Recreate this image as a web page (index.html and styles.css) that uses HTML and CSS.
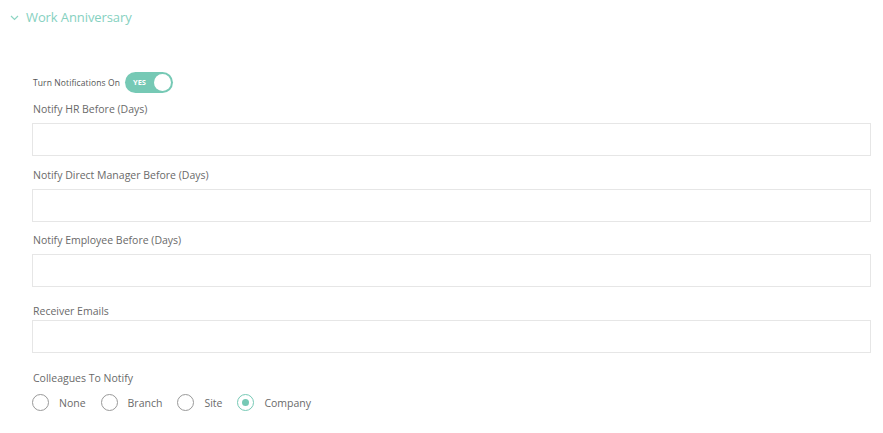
FILE: index.html
```html
<!DOCTYPE html>
<html>
<head>
<meta charset="utf-8">
<link rel="stylesheet" href="styles.css">
</head>
<body>
<div class="section">
  <div class="section-header">
    <svg class="chevron" width="9" height="6" viewBox="0 0 9 6"><path d="M1 1 L4.5 4.5 L8 1" fill="none" stroke="#8dd5c3" stroke-width="1.2"/></svg>
    <span class="section-title">Work Anniversary</span>
  </div>
  <div class="section-body">
    <div class="toggle-row">
      <span class="toggle-label">Turn Notifications On</span>
      <span class="toggle"><span class="toggle-text">YES</span><span class="knob"></span></span>
    </div>
    <div class="field">
      <label class="field-label">Notify HR Before (Days)</label>
      <input class="field-input" type="text">
    </div>
    <div class="field field-second">
      <label class="field-label">Notify Direct Manager Before (Days)</label>
      <input class="field-input" type="text">
    </div>
    <div class="field">
      <label class="field-label">Notify Employee Before (Days)</label>
      <input class="field-input" type="text">
    </div>
    <div class="field field-tight">
      <label class="field-label">Receiver Emails</label>
      <input class="field-input" type="text">
    </div>
    <div class="field field-radios">
      <label class="field-label">Colleagues To Notify</label>
      <div class="radios">
        <span class="radio"><span class="circle"></span>None</span>
        <span class="radio"><span class="circle"></span>Branch</span>
        <span class="radio"><span class="circle"></span>Site</span>
        <span class="radio checked"><span class="circle"></span>Company</span>
      </div>
    </div>
  </div>
</div>
</body>
</html>
```
FILE: styles.css
```css
html, body { margin: 0; padding: 0; background: #fff; }
body { font-family: "Open Sans", "Noto Sans", sans-serif; color: #666; }
.section-header { display: flex; align-items: center; height: 34px; padding-left: 10px; }
.chevron { margin-right: 7px; margin-top: 1px; }
.section-title { font-size: 13px; color: #86d1bf; letter-spacing: -0.1px; }
.section-body { padding: 37px 12px 0 32px; }
.toggle-row { display: flex; align-items: center; height: 22px; }
.toggle-label { font-size: 8.5px; color: #555; margin-left: 1px; margin-right: 4px; letter-spacing: 0.1px; }
.toggle { position: relative; display: inline-flex; align-items: center; width: 48px; height: 21px; border-radius: 11px; background: #76c9b5; margin-left: 1px; }
.toggle-text { font-size: 7.5px; font-weight: 700; color: #fff; margin-left: 8px; }
.knob { position: absolute; right: 2px; top: 2px; width: 17px; height: 17px; border-radius: 50%; background: #fff; }
.field { margin-top: 8px; }
.field + .field { margin-top: 10px; }
.field.field-second { margin-top: 11px; }
.field.field-tight { margin-top: 16px; }
.field-label { display: block; font-size: 10.5px; line-height: 16px; color: #6a6a6a; margin-left: 1px; margin-bottom: 6px; }
.field-tight .field-label { margin-bottom: 1px; }
.field-input { display: block; box-sizing: border-box; width: 100%; height: 33px; border: 1px solid #e6e6e6; margin: 0; padding: 0 8px; background: #fff; outline: none; }
.field.field-radios { margin-top: 17px; }
.field-radios .field-label { margin-bottom: 8px; }
.radios { display: flex; align-items: center; }
.radio { display: inline-flex; align-items: center; font-size: 10.5px; color: #6a6a6a; margin-right: 15px; }
.circle { box-sizing: border-box; width: 17px; height: 17px; border-radius: 50%; border: 1px solid #999; margin-right: 10px; background: #fff; display: inline-flex; align-items: center; justify-content: center; }
.checked .circle { border-color: #76c9b5; }
.checked .circle::after { content: ""; width: 7px; height: 7px; border-radius: 50%; background: #76c9b5; }
```
